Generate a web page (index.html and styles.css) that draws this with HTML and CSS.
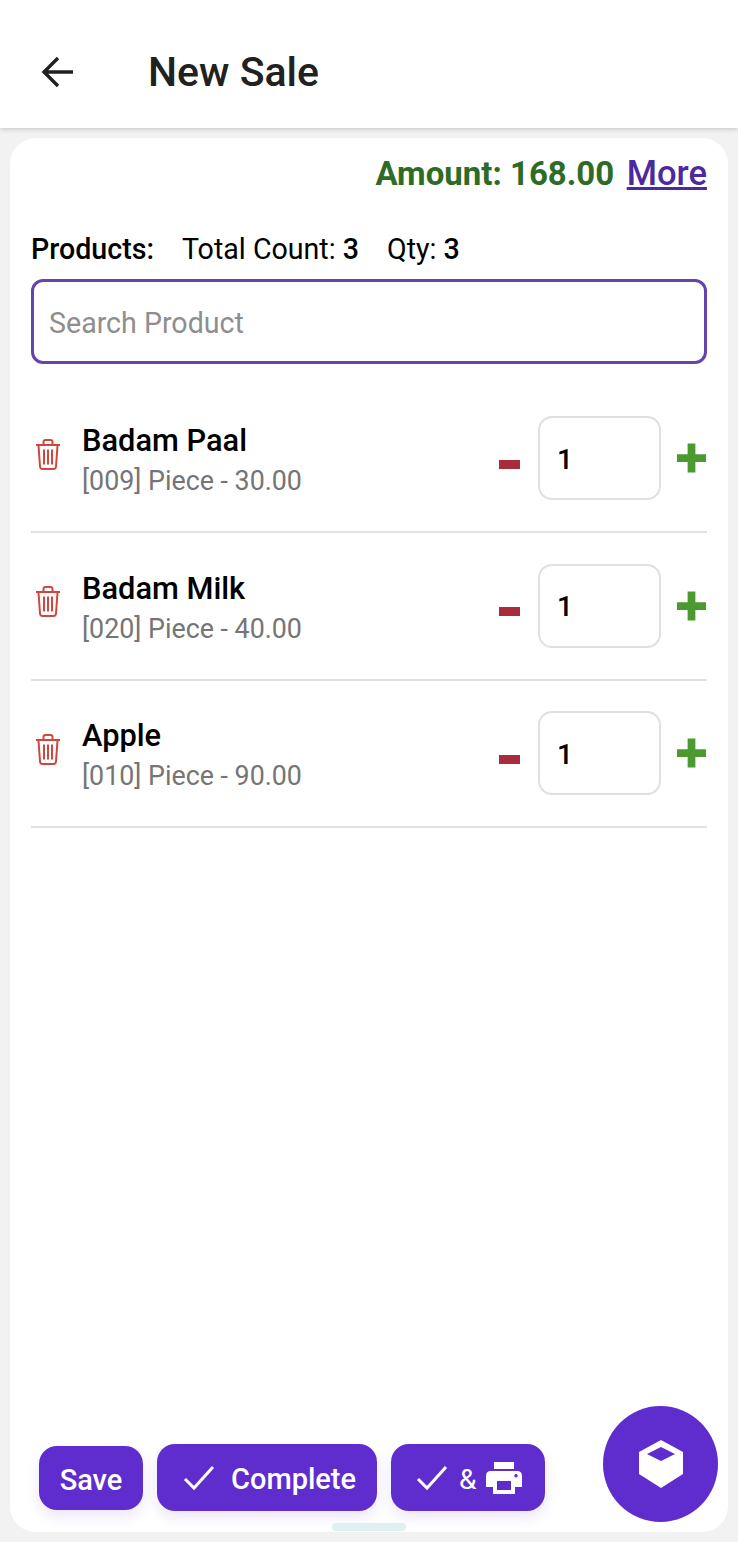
FILE: index.html
```html
<!DOCTYPE html>
<html lang="en">
<head>
  <meta charset="UTF-8" />
  <title>New Sale</title>
  <link rel="stylesheet" href="styles.css">
</head>
<body>

  <header class="topbar">
    <svg class="back-icon" viewBox="0 0 36 36"><path d="M33 18H4M18 4L4 18l14 14" fill="none" stroke="#212121" stroke-width="3.4"/></svg>
    <h1 class="title">New Sale</h1>
  </header>

  <main class="card">
    <div class="amount-row">
      <span class="amount">Amount: 168.00</span>
      <a class="more" href="#">More</a>
    </div>

    <div class="summary">
      <b class="summary-label">Products:</b>
      <span>Total Count: <b>3</b></span>
      <span>Qty: <b>3</b></span>
    </div>

    <input class="search" type="text" placeholder="Search Product">

    <div class="item">
      <svg class="trash" viewBox="0 0 28 32"><path d="M2 6.500h24M9.500 6V3.500q0-2 2-2h5q2 0 2 2V6M4.500 7l1.500 21q.2 2.500 2.500 2.500h11q2.300 0 2.500-2.500L23.500 7M10 11v15M14 11v15M18 11v15" fill="none" stroke="#d0473d" stroke-width="2"/></svg>
      <div class="item-info">
        <div class="item-name">Badam Paal</div>
        <div class="item-meta">[009] Piece - 30.00</div>
      </div>
      <span class="minus"></span>
      <div class="qty">1</div>
      <svg class="plus" viewBox="0 0 32 32"><path d="M12 1h8v11h11v8H20v11h-8V20H1v-8h11z" fill="#4a9a30"/></svg>
    </div>

    <div class="item">
      <svg class="trash" viewBox="0 0 28 32"><path d="M2 6.500h24M9.500 6V3.500q0-2 2-2h5q2 0 2 2V6M4.500 7l1.500 21q.2 2.500 2.500 2.500h11q2.300 0 2.500-2.500L23.500 7M10 11v15M14 11v15M18 11v15" fill="none" stroke="#d0473d" stroke-width="2"/></svg>
      <div class="item-info">
        <div class="item-name">Badam Milk</div>
        <div class="item-meta">[020] Piece - 40.00</div>
      </div>
      <span class="minus"></span>
      <div class="qty">1</div>
      <svg class="plus" viewBox="0 0 32 32"><path d="M12 1h8v11h11v8H20v11h-8V20H1v-8h11z" fill="#4a9a30"/></svg>
    </div>

    <div class="item">
      <svg class="trash" viewBox="0 0 28 32"><path d="M2 6.500h24M9.500 6V3.500q0-2 2-2h5q2 0 2 2V6M4.500 7l1.500 21q.2 2.500 2.500 2.500h11q2.300 0 2.500-2.500L23.500 7M10 11v15M14 11v15M18 11v15" fill="none" stroke="#d0473d" stroke-width="2"/></svg>
      <div class="item-info">
        <div class="item-name">Apple</div>
        <div class="item-meta">[010] Piece - 90.00</div>
      </div>
      <span class="minus"></span>
      <div class="qty">1</div>
      <svg class="plus" viewBox="0 0 32 32"><path d="M12 1h8v11h11v8H20v11h-8V20H1v-8h11z" fill="#4a9a30"/></svg>
    </div>

    <div class="actions">
      <button class="btn btn-save">Save</button>
      <button class="btn btn-complete">
        <svg class="check" viewBox="0 0 32 26"><path d="M2 14l9 9L30 2" fill="none" stroke="#fff" stroke-width="3"/></svg>
        Complete
      </button>
      <button class="btn btn-print">
        <svg class="check" viewBox="0 0 32 26"><path d="M2 14l9 9L30 2" fill="none" stroke="#fff" stroke-width="3"/></svg>
        <span class="amp">&amp;</span>
        <svg class="printer" viewBox="0 0 36 32"><path fill-rule="evenodd" d="M8 0h20v7H8zM5 9h26q5 0 5 5v11h-7v7H7v-7H0V14q0-5 5-5zm6 10v9h14v-9zM30 12a1.700 1.700 0 1 0 .01 0z" fill="#fff"/></svg>
      </button>
    </div>

    <div class="fab">
      <svg class="box-icon" viewBox="0 0 44 48"><path fill-rule="evenodd" d="M22 0l22 12v22L22 48 0 34V12zM22 7L8 14l14 7 14-7z" fill="#fff"/></svg>
    </div>
    <div class="handle"></div>
  </main>

</body>
</html>
```
FILE: styles.css
```css
* {
  box-sizing: border-box;
}
html, body {
  height: 100%;
}
body {
  margin: 0;
  font-family: Roboto, "Liberation Sans", sans-serif;
  background-color: #f2f2f2;
  color: #000;
  display: flex;
  flex-direction: column;
}
.topbar {
  height: 128px;
  flex-shrink: 0;
  background: #fff;
  display: flex;
  align-items: center;
  padding: 16px 0 0 40px;
  box-shadow: 0 1px 5px rgba(0,0,0,0.2);
}
.back-icon {
  width: 36px;
  height: 36px;
}
.title {
  margin: 0 0 0 72px;
  font-size: 41px;
  font-weight: 500;
  color: #212121;
}
.card {
  position: relative;
  flex: 1;
  margin: 10px;
  padding: 14px 21px 0;
  background: #fff;
  border-radius: 26px;
  display: flex;
  flex-direction: column;
}
.amount-row {
  display: flex;
  justify-content: flex-end;
  align-items: center;
  gap: 12.500px;
  height: 42px;
}
.amount {
  font-size: 33px;
  font-weight: 700;
  color: #2e6b26;
}
.more {
  font-size: 34.600px;
  font-weight: 500;
  color: #4a2a9e;
}
.summary {
  display: flex;
  gap: 28px;
  margin-top: 36px;
  font-size: 28.600px;
  height: 38px;
  align-items: center;
}
.summary b {
  font-weight: 500;
}
.search {
  display: block;
  width: 100%;
  height: 85px;
  margin-top: 11px;
  padding: 2px 15px 0;
  border: 3px solid #6544ab;
  border-radius: 12px;
  font-family: inherit;
  font-size: 28.600px;
  outline: none;
}
.search::placeholder {
  color: #8e8e8e;
}
.item {
  display: flex;
  align-items: center;
  height: 147.500px;
  padding: 30.500px 0 31px 3px;
  border-bottom: 2px solid #e2e2e2;
}
.search + .item {
  height: 169px;
  padding-top: 52px;
}
.trash {
  width: 28px;
  height: 33px;
  margin-right: 20px;
  margin-top: -8px;
}
.item-info {
  flex: 1;
  margin-top: 6px;
}
.item-name {
  font-size: 30.800px;
  font-weight: 500;
  line-height: 40px;
}
.item-meta {
  font-size: 26.800px;
  color: #757575;
  line-height: 40px;
}
.minus {
  width: 21px;
  height: 9px;
  background: #a82c3c;
  margin: 12px 18px 0 0;
}
.qty {
  width: 123px;
  height: 84px;
  border: 2px solid #e0e0e0;
  border-radius: 14px;
  padding: 2px 0 0 17px;
  font-size: 28px;
  font-weight: 500;
  display: flex;
  align-items: center;
}
.plus {
  width: 31px;
  height: 32px;
  margin-left: 15px;
}
.actions {
  position: absolute;
  left: 29px;
  bottom: 21px;
  display: flex;
  align-items: center;
  gap: 14px;
}
.btn {
  height: 67px;
  border: none;
  border-radius: 18px;
  background: #5f2dce;
  color: #fff;
  font-family: inherit;
  font-size: 29px;
  font-weight: 500;
  display: flex;
  align-items: center;
  box-shadow: 0 6px 14px rgba(95,45,206,0.12);
}
.btn-save {
  width: 104px;
  height: 64px;
  justify-content: center;
  padding: 4px 0 0;
}
.btn-complete {
  width: 220px;
  padding: 3px 0 0 26px;
  gap: 16px;
}
.btn-print {
  width: 154px;
  padding: 3px 0 0 25px;
}
.check {
  width: 32px;
  height: 26px;
  margin-top: -3px;
}
.amp {
  margin-left: 11px;
  font-weight: 400;
  font-size: 28px;
}
.printer {
  width: 36px;
  height: 32px;
  margin: -3px 0 0 10px;
}
.fab {
  position: absolute;
  right: 10px;
  bottom: 10px;
  width: 115px;
  height: 116px;
  border-radius: 50%;
  background: #5f2dce;
  display: flex;
  align-items: center;
  justify-content: center;
}
.box-icon {
  width: 44px;
  height: 48px;
}
.handle {
  position: absolute;
  left: 322px;
  bottom: 1px;
  width: 74px;
  height: 8px;
  border-radius: 4px;
  background: #dff0f0;
}
```
